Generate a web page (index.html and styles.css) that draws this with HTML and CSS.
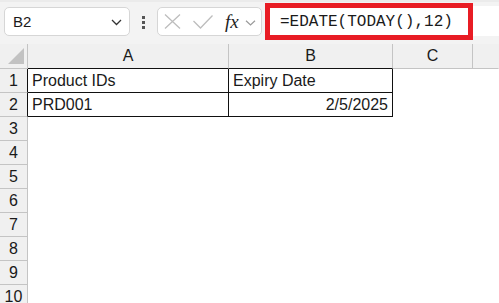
FILE: index.html
```html
<!DOCTYPE html>
<html>
  <head>
    <meta charset="UTF-8" />
    <title>EDATE</title>
    <link rel="stylesheet" href="styles.css">
  </head>
  <body>
    <div class="formula-bar">
      <div class="name-box">
        <span>B2</span>
        <svg class="chev" width="11" height="7" viewBox="0 0 11 7"><path d="M1 1 L5.5 5.5 L10 1" fill="none" stroke="#333" stroke-width="1.3"/></svg>
      </div>
      <div class="grip"><i></i><i></i><i></i></div>
      <div class="fx-box">
        <svg class="cancel" width="17" height="15" viewBox="0 0 17 15"><path d="M1 0.5 L16 14.5 M16 0.5 L1 14.5" fill="none" stroke="#bdbdbd" stroke-width="1.3"/></svg>
        <svg class="enter" width="20" height="14" viewBox="0 0 20 14"><path d="M0.5 6 L7.5 13 L19.5 0.5" fill="none" stroke="#bdbdbd" stroke-width="1.3"/></svg>
        <span class="fx">fx</span>
        <svg class="chev-small" width="11" height="6" viewBox="0 0 11 6"><path d="M1 0.8 L5.5 5 L10 0.8" fill="none" stroke="#9a9a9a" stroke-width="1.2"/></svg>
      </div>
      <div class="formula-input">
        <span class="formula">=EDATE(TODAY(),12)</span>
      </div>
      <!-- red annotation box around the formula -->
      <div class="highlight"></div>
    </div>

    <div class="sheet">
      <div class="corner"><span class="tri"></span></div>
      <div class="col-head dark">A</div>
      <div class="col-head dark">B</div>
      <div class="col-head">C</div>
      <div class="col-head last"></div>

      <div class="row-head dark">1</div>
      <div class="cell boxed">Product IDs</div>
      <div class="cell boxed">Expiry Date</div>
      <div class="cell"></div>
      <div class="cell"></div>

      <div class="row-head dark">2</div>
      <div class="cell boxed">PRD001</div>
      <div class="cell boxed num">2/5/2025</div>
      <div class="cell"></div>
      <div class="cell"></div>

      <div class="row-head">3</div><div class="cell"></div><div class="cell"></div><div class="cell"></div><div class="cell"></div>
      <div class="row-head">4</div><div class="cell"></div><div class="cell"></div><div class="cell"></div><div class="cell"></div>
      <div class="row-head">5</div><div class="cell"></div><div class="cell"></div><div class="cell"></div><div class="cell"></div>
      <div class="row-head">6</div><div class="cell"></div><div class="cell"></div><div class="cell"></div><div class="cell"></div>
      <div class="row-head">7</div><div class="cell"></div><div class="cell"></div><div class="cell"></div><div class="cell"></div>
      <div class="row-head">8</div><div class="cell"></div><div class="cell"></div><div class="cell"></div><div class="cell"></div>
      <div class="row-head">9</div><div class="cell"></div><div class="cell"></div><div class="cell"></div><div class="cell"></div>
      <div class="row-head">10</div><div class="cell"></div><div class="cell"></div><div class="cell"></div><div class="cell"></div>
    </div>
  </body>
</html>
```

FILE: styles.css
```css
/* sheet look */
body {
  margin: 0;
  height: 303px;
  overflow: hidden;
  background: #fff;
  font-family: "Liberation Sans", Arial, sans-serif;
  color: #1a1a1a;
}

.formula-bar {
  position: relative;
  display: flex;
  align-items: flex-start;
  height: 44px;
  box-sizing: border-box;
  padding: 7px 0 0 4px;
  background: #f3f3f3;
  border-top: 2px solid #ebebeb;
}
.name-box {
  display: flex;
  align-items: center;
  justify-content: space-between;
  width: 126px;
  height: 29px;
  box-sizing: border-box;
  margin-top: -2px;
  padding: 0 7px 0 8px;
  background: #fff;
  border: 1px solid #d6d6d6;
  border-radius: 5px;
  font-size: 15px;
}
.chev {
  margin-top: 1px;
}
.grip {
  display: flex;
  flex-direction: column;
  align-items: center;
  gap: 2px;
  width: 27px;
  margin-top: 7px;
}
.grip i {
  width: 3px;
  height: 3px;
  background: #555;
}
.fx-box {
  display: flex;
  align-items: center;
  width: 105px;
  height: 29px;
  box-sizing: border-box;
  margin-top: -2px;
  padding-left: 6px;
  background: #fff;
  border: 1px solid #d6d6d6;
  border-radius: 5px;
}
.enter {
  margin-left: 12px;
}
.fx {
  margin-left: 12px;
  font-family: "Liberation Serif", serif;
  font-style: italic;
  font-size: 19px;
  color: #222;
  line-height: 1;
}
.chev-small {
  margin-left: 6px;
  margin-top: 2px;
}
.formula-input {
  flex: 1;
  height: 30px;
  box-sizing: border-box;
  margin: -3px 0 0 3px;
  padding: 6px 0 0 15px;
  background: #fff;
}
.formula {
  font-family: "Liberation Mono", monospace;
  font-size: 16px;
  color: #1a1a1a;
}
.highlight {
  position: absolute;
  left: 265px;
  top: 1px;
  width: 208px;
  height: 37px;
  box-sizing: border-box;
  border: 5px solid #e81c24;
}

.sheet {
  display: grid;
  grid-template-columns: 28px 201px 164px 80px 1fr;
  grid-auto-rows: 24px;
  grid-template-rows: 25px;
  font-size: 16px;
}
.sheet > div {
  box-sizing: border-box;
  border-right: 1px solid transparent;
  border-bottom: 1px solid transparent;
  line-height: 24px;
}
.corner {
  position: relative;
  background: #f0f0f0;
  border-right-color: #c4c4c4 !important;
  border-bottom-color: #c4c4c4 !important;
}
.tri {
  position: absolute;
  left: 8px;
  top: 4px;
  width: 16px;
  height: 16px;
  background: #c2c2c2;
  clip-path: polygon(100% 0, 100% 100%, 0 100%);
}
.col-head {
  background: #f0f0f0;
  text-align: center;
  border-right-color: #c4c4c4 !important;
  border-bottom-color: #c4c4c4 !important;
}
.col-head.dark {
  border-bottom-color: #111 !important;
}
.col-head.last {
  border-right-color: transparent !important;
}
.row-head {
  background: #f0f0f0;
  text-align: center;
  border-right-color: #c4c4c4 !important;
  border-bottom-color: #c4c4c4 !important;
}
.row-head.dark {
  border-right-color: #111 !important;
}
.cell {
  padding: 0 4px;
  white-space: nowrap;
}
.cell.boxed {
  border-right-color: #111;
  border-bottom-color: #111;
}
.cell.num {
  text-align: right;
}
```
